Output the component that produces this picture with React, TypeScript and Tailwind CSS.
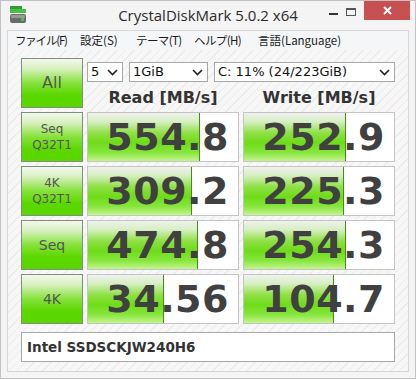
import React from "react";

type Row = { top: string; bottom?: string; read: string; write: string; rw: number; ww: number };

const rows: Row[] = [
  { top: "Seq", bottom: "Q32T1", read: "554.8", write: "252.9", rw: 112, ww: 102 },
  { top: "4K", bottom: "Q32T1", read: "309.2", write: "225.3", rw: 104, ww: 100 },
  { top: "Seq", read: "474.8", write: "254.3", rw: 110, ww: 102 },
  { top: "4K", read: "34.56", write: "104.7", rw: 76, ww: 90 },
];

const menu = [
  { label: "ファイル(F)", w: "w-[65px] tracking-[-1.2px]" },
  { label: "設定(S)", w: "w-[56px]" },
  { label: "テーマ(T)", w: "w-[58px] tracking-[-0.6px]" },
  { label: "ヘルプ(H)", w: "w-[64px] tracking-[-0.6px]" },
  { label: "言語(Language)", w: "w-auto" },
];

const Chevron = () => (
  <svg width="11" height="7" viewBox="0 0 11 7" className="shrink-0">
    <path d="M1 1 L5.5 5.5 L10 1" fill="none" stroke="#222" strokeWidth="1.6" />
  </svg>
);

const Select = ({ value, w }: { value: string; w: string }) => (
  <div className={`${w} h-[20px] bg-white border border-[#a8a8a8] flex items-center justify-between pl-[3px] pr-[4px] text-[13px] text-[#111] font-['DejaVu_Sans',sans-serif]`}>
    <span>{value}</span>
    <Chevron />
  </div>
);

const TestButton = ({ top, bottom, size }: { top: string; bottom?: string; size: string }) => (
  <div className={`h-full border border-[#7f8f7f] bg-[linear-gradient(to_bottom,#f3f8ee_0%,#d8f0c0_20%,#86e23a_50%,#5cd800_75%,#5ad600_100%)] flex flex-col items-center justify-center text-[#555] font-['DejaVu_Sans',sans-serif] ${size}`}>
    <span>{top}</span>
    {bottom && <span>{bottom}</span>}
  </div>
);

const Meter = ({ value, fill }: { value: string; fill: number }) => (
  <div className="relative h-full bg-white border border-[#c4c4c4] flex items-center justify-end pr-[9px] overflow-hidden">
    <div
      className="absolute left-0 top-0 bottom-0 border-r border-[#3f8f10] bg-[linear-gradient(to_bottom,#f0f2ee_0%,#d6efc2_18%,#8ee044_42%,#6edc18_62%,#86e63c_82%,#c4f48e_100%)]"
      style={{ width: fill }}
    />
    <span className="relative font-['DejaVu_Sans',sans-serif] font-bold text-[38px] leading-none tracking-[0.5px] text-[#404040]">
      {value}
    </span>
  </div>
);

export default function App() {
  return (
    <div className="w-[416px] h-[379px] bg-[#f4f4f4] border border-[#c2c2c2] flex flex-col overflow-hidden">
      {/* title bar */}
      <div className="h-[29px] shrink-0 grid grid-cols-[1fr_auto_1fr] items-start">
        <div className="pl-[9px] pt-[5px]">
          <svg width="16" height="18" viewBox="0 0 16 18">
            <rect x="0" y="0" width="12" height="3" fill="#2e9e2e" />
            <rect x="0" y="3" width="16" height="4" fill="#45c245" />
            <rect x="0" y="8" width="16" height="9" rx="2" fill="#6b6b6b" />
            <rect x="1" y="9" width="14" height="3" rx="1" fill="#9a9a9a" />
            <rect x="11" y="12" width="3" height="3" fill="#3ad03a" />
          </svg>
        </div>
        <div className="pt-[5px] text-[15px] leading-[18px] text-[#2b2b2b] font-['Open_Sans',sans-serif]">
          CrystalDiskMark 5.0.2 x64
        </div>
        <div className="flex justify-end items-start pr-[5px]">
          <div className="w-[26px] h-[20px] flex items-start justify-center pt-[12px]">
            <div className="w-[9px] h-[2px] bg-[#333]" />
          </div>
          <div className="w-[18px] h-[20px] flex items-start justify-start pt-[7px]">
            <div className="w-[10px] h-[8px] border border-[#555] border-t-2" />
          </div>
          <div className="w-[46px] h-[20px] -mt-px bg-[#c75050] flex items-center justify-center">
            <svg width="9" height="9" viewBox="0 0 9 9">
              <path d="M1 1 L8 8 M8 1 L1 8" stroke="#fff" strokeWidth="2" />
            </svg>
          </div>
        </div>
      </div>

      {/* client area */}
      <div className="mx-[6px] h-[342px] shrink-0 border border-[#d6d6d6] flex flex-col">
        <div className="h-[19px] shrink-0 bg-[#f5f6f7] flex items-center pl-[7px] text-[11.5px] text-[#1a1a1a] font-['Noto_Sans_CJK_JP',sans-serif]">
          {menu.map((m) => (
            <span key={m.label} className={`${m.w} shrink-0 whitespace-nowrap`}>
              {m.label}
            </span>
          ))}
        </div>

        <div className="flex-1 pt-[8px] pl-[13px] bg-[#f6f6f6] bg-[repeating-linear-gradient(135deg,#f7f7f7_0px,#f7f7f7_5px,#ececec_5px,#ececec_6px)]">
          <div className="grid grid-cols-[62px_152px_152px] grid-rows-[50px_50px_50px_50px_50px] gap-x-[4px] gap-y-[4px]">
            <TestButton top="All" size="text-[16px]" />
            <div className="col-span-2 flex flex-col">
              <div className="mt-[4px] flex gap-[6px]">
                <Select value="5" w="w-[36px]" />
                <Select value="1GiB" w="w-[79px]" />
                <Select value="C: 11% (24/223GiB)" w="w-[181px]" />
              </div>
              <div className="mt-[6px] grid grid-cols-2 gap-x-[4px] font-['DejaVu_Sans',sans-serif] font-bold text-[16px] leading-[20px] text-[#333] text-center">
                <span>Read [MB/s]</span>
                <span>Write [MB/s]</span>
              </div>
            </div>
            {rows.map((r) => (
              <React.Fragment key={r.read}>
                <TestButton
                  top={r.top}
                  bottom={r.bottom}
                  size={r.bottom ? "text-[12px] leading-[16px]" : "text-[14px]"}
                />
                <Meter value={r.read} fill={r.rw} />
                <Meter value={r.write} fill={r.ww} />
              </React.Fragment>
            ))}
          </div>
          <div className="mt-[8px] w-[374px] h-[30px] bg-white border border-[#a8a8a8] flex items-center pl-[5px] font-['DejaVu_Sans',sans-serif] font-bold text-[13.5px] text-[#333]">
            Intel SSDSCKJW240H6
          </div>
        </div>
      </div>
    </div>
  );
}
